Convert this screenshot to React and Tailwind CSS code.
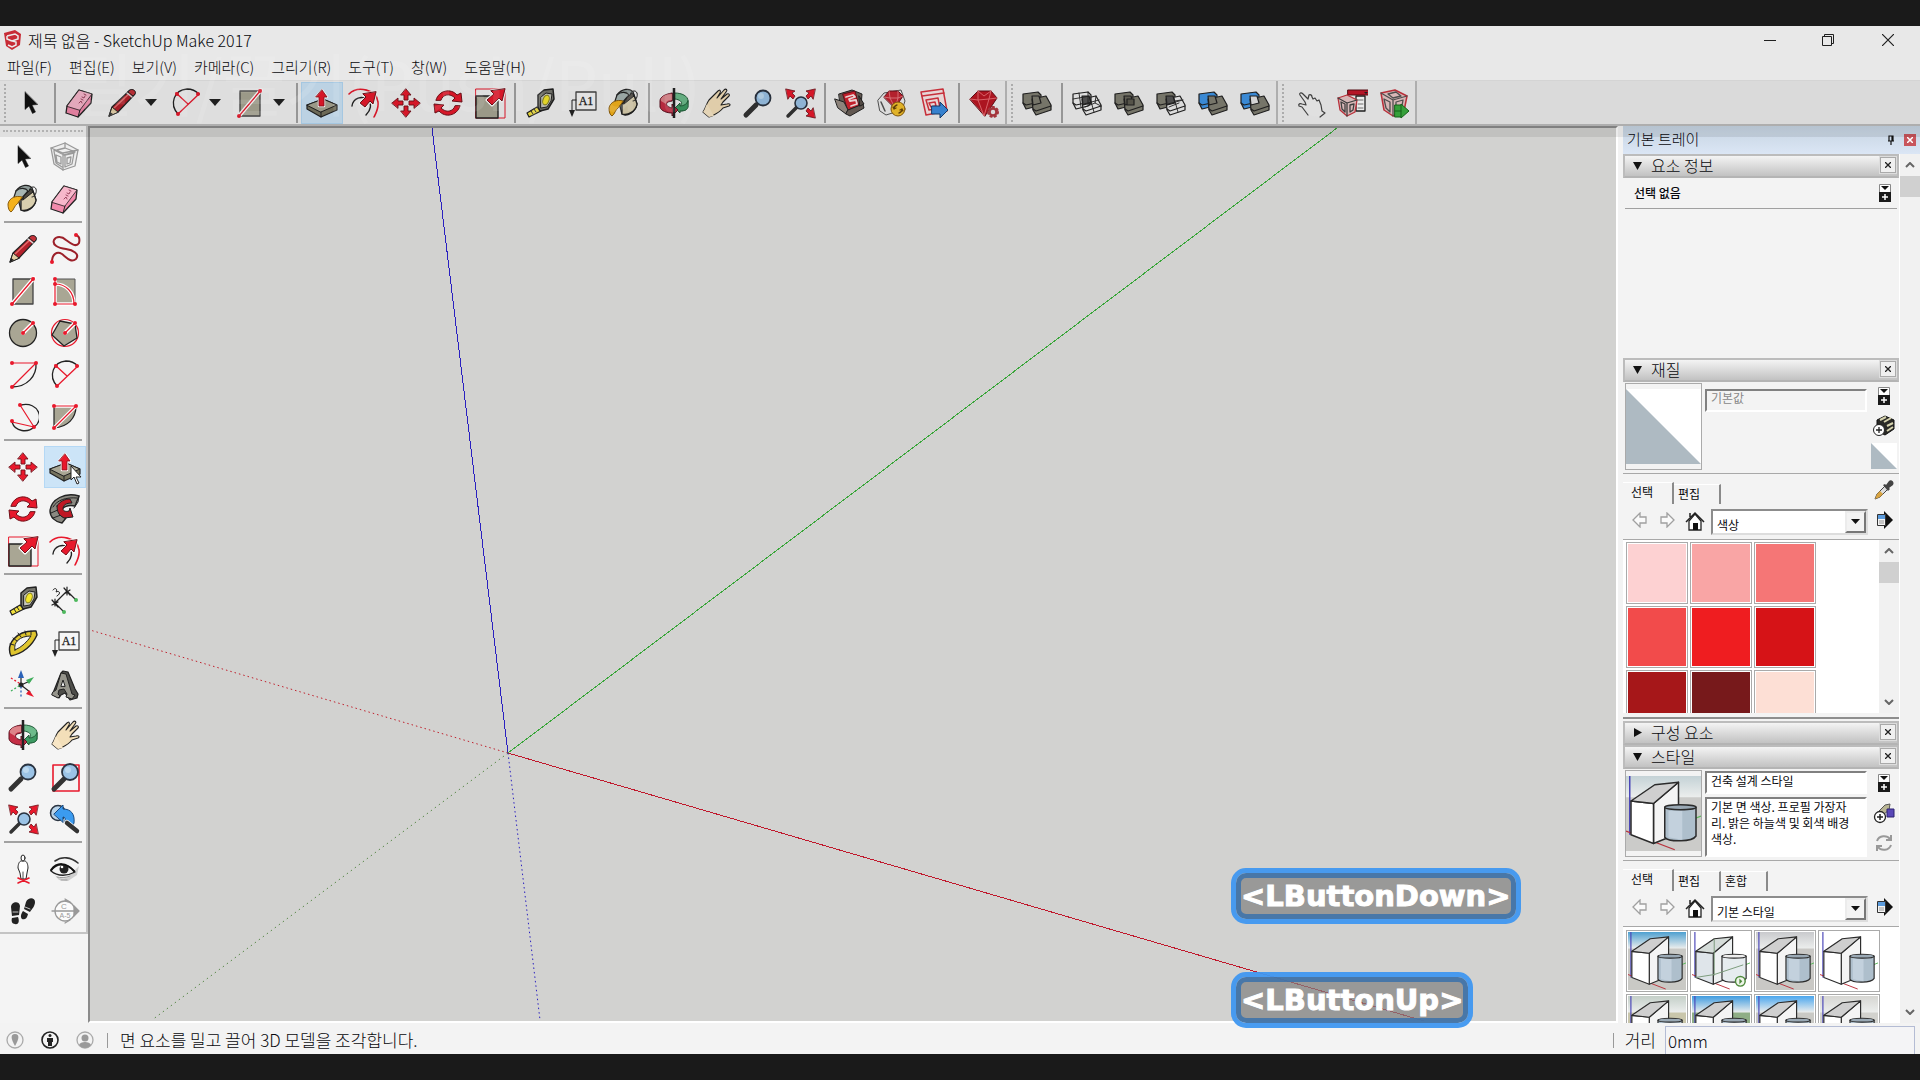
import { useId } from 'react'

const RED = '#e8192c'
const INK = '#222'
const CLAY = '#a9a694'

function Svg({ children, size = 32, label }) {
  return (
    <svg
      width={size}
      height={size}
      viewBox="0 0 32 32"
      fill="none"
      strokeLinecap="round"
      strokeLinejoin="round"
      role={label ? 'img' : undefined}
      aria-label={label}
      className="shrink-0"
    >
      {children}
    </svg>
  )
}

function Dots({ points }) {
  return points.map(([x, y]) => <circle key={x + '-' + y} cx={x} cy={y} r="2" fill={RED} />)
}

// two overlapping blocks, used by every solid tool
function Solids({ back, front, mid, children }) {
  return (
    <Svg>
      <g stroke={INK} strokeWidth="1.2">
        <path d="M2 7 17 5l3 3v8l-3 3-12 3-3-6z" fill={back} />
        <path d="M2 16l3 2 14-3" />
        <path d="M11 12l14-3 5 9v5l-15 5-3-5z" fill={front} />
        <path d="M12 22l3 2 15-5" />
        <path d="M11 9h7l2 7-8 2z" fill={mid} />
        {children}
      </g>
    </Svg>
  )
}

const wire = (
  <g strokeWidth="0.9">
    <path d="M8 6l2 14M2 12l17-3M17 5v13M13 17l15-4M19 11l4 14M25 9l-1 7 6 3M24 16l-10 4" />
  </g>
)

const icons = {
  select: (
    <Svg>
      <path d="M11 5v17.500l4-3.500 3.500 7.500 3-1.500-3.500-7 5.500-.500z" fill="#111" stroke="#111" strokeWidth=".5" />
    </Svg>
  ),
  component: (
    <Svg>
      <g stroke="#999" strokeWidth="1.300">
        <path d="M2 7l14-5 13 7-3 16-12 4L5 23z" fill="#eee" />
        <path d="M2 7l12 5 15-3M14 12v17M5 9l10 5 11-3M5 10l2 12 6 4M16 14l9-2-2 11-7 3zM7 14l5 2v7l-4-2zM16 2v5l-8 2M16 7l8 3M18 17l4-1-1 6-3 1z" />
      </g>
    </Svg>
  ),
  paint: (
    <Svg>
      <path d="M9 8C14 1 22 1 25 5l4 12c-1 8-10 13-15 10z" fill="#8d9a97" stroke={INK} strokeWidth="1.300" />
      <path d="M14 17l12-9 3 9c-1 7-9 12-15 10z" fill="#d9cfae" stroke={INK} strokeWidth="1.300" />
      <path d="M17 13l7-7 2 3-10 8z" fill="#4c4840" stroke={INK} />
      <path d="M9 8c4-4 10-3 12 0l-7 8-7-2z" fill="#a6b5b2" stroke={INK} strokeWidth="1.200" />
      <path d="M22 8c1-5 6-5 7-2s-1 8-4 8" stroke={INK} />
      <path d="M15 14C9 12 2 15 1 21c0 4 1 7 3 8 3-2 3-6 6-8z" fill="#f5b21c" stroke="#8a5c0c" />
    </Svg>
  ),
  eraser: (
    <Svg>
      <path d="M3 19 15 3l13 4-1 9-13 14-12-4z" fill="#f28aac" stroke={INK} strokeWidth="1.300" />
      <path d="M3 19 15 3l13 4-12 16z" fill="#f7b7cb" stroke={INK} strokeWidth="0.800" />
      <path d="M16 23l-2 7" stroke={INK} />
      <path d="M15 16l2-2 1 2M17 12l2 1M18 10l2 1 1-2M20 7l2 1" stroke="#9c4660" />
    </Svg>
  ),
  pencil: (
    <Svg>
      <path d="M3 29l3-9L24 3l5 4-17 18z" fill="#b3202a" stroke={INK} strokeWidth="1.200" />
      <path d="M8 21 25 5" stroke="#e46a6a" strokeWidth="1.500" />
      <path d="M3 29l3-9 6 5z" fill="#e3cfa5" stroke={INK} />
      <path d="M3 29l1-4 3 2z" fill={INK} />
      <path d="M24 3c2-2 7 1 5 4l-2 2-5-4z" fill="#c4323a" stroke={INK} />
      <path d="M21 6l5 4" stroke="#ddd" strokeWidth="1.500" />
    </Svg>
  ),
  freehand: (
    <Svg>
      <path d="M3 29c0-8 5-11 10-8 5 4 9 9 14 5 4-5-3-9-10-10C9 15 3 12 5 7c2-4 8-4 12 0 4 3 10 8 13 3 1-4 0-7-3-8" stroke="#9c2029" strokeWidth="2" />
      <Dots points={[[3, 29], [27, 2]]} />
    </Svg>
  ),
  rect: (
    <Svg>
      <path d="M6 4h20v25H6z" fill={CLAY} stroke="#444" strokeWidth="1.300" />
      <path d="M5 29 27 3" stroke="#fff" strokeWidth="4" />
      <path d="M5 29 27 3" stroke={RED} strokeWidth="1.300" />
      <Dots points={[[5, 29], [26, 4]]} />
    </Svg>
  ),
  rotrect: (
    <Svg>
      <path d="M6 4h20v25H6z" fill={CLAY} stroke="#555" />
      <path d="M6 9c11 0 19 8 19 20H6V4" stroke="#fff" strokeWidth="3.500" />
      <path d="M6 9c11 0 19 8 19 20H6V4" stroke={RED} strokeWidth="1.200" />
      <Dots points={[[6, 4], [6, 9], [6, 29], [26, 29]]} />
    </Svg>
  ),
  circle: (
    <Svg>
      <circle cx="16" cy="16" r="13.500" fill={CLAY} stroke={INK} strokeWidth="1.300" />
      <path d="M16 16 26 6" stroke="#fff" strokeWidth="4" />
      <path d="M16 16 26 6" stroke={RED} strokeWidth="1.300" />
      <Dots points={[[16, 16], [26, 6]]} />
    </Svg>
  ),
  polygon: (
    <Svg>
      <circle cx="16" cy="16" r="13.500" stroke={RED} strokeWidth="1.200" />
      <path d="M11 4 26 7l2 14-13 8L3 18z" fill={CLAY} stroke={INK} strokeWidth="1.300" />
      <path d="M16 16 26 6" stroke="#fff" strokeWidth="4" />
      <path d="M16 16 26 6" stroke={RED} strokeWidth="1.300" />
      <Dots points={[[16, 16], [26, 6]]} />
    </Svg>
  ),
  arc: (
    <Svg>
      <path d="M29 4c1 13-9 24-24 24" stroke={INK} strokeWidth="1.300" />
      <path d="M5 4h24L5 28" stroke={RED} strokeWidth="1.200" />
      <Dots points={[[5, 4], [29, 4], [5, 28]]} />
    </Svg>
  ),
  arc2: (
    <Svg>
      <path d="M8 27C-1 17 4 3 17 2c6 0 10 3 12 5" stroke={INK} strokeWidth="1.300" />
      <path d="M8 27 29 7M6 6l12 11" stroke={RED} strokeWidth="1.300" />
      <Dots points={[[8, 27], [28, 7], [7, 7]]} />
    </Svg>
  ),
  arc3: (
    <Svg>
      <path d="M14 4c18-4 24 15 13 22-6 6-19 5-22-5" stroke={INK} strokeWidth="1.300" />
      <path d="M13 4l14 22L5 21" stroke={RED} strokeWidth="1.200" />
      <Dots points={[[13, 4], [27, 26], [5, 20]]} />
    </Svg>
  ),
  pie: (
    <Svg>
      <path d="M5 5h22C27 17 19 26 5 27z" fill={CLAY} stroke={INK} strokeWidth="1.200" />
      <path d="M5 5h22L5 27" stroke="#fff" strokeWidth="3.500" />
      <path d="M5 5h22L5 27" stroke={RED} strokeWidth="1.200" />
      <Dots points={[[5, 5], [27, 5], [5, 27]]} />
    </Svg>
  ),
  move: (
    <Svg>
      <path
        d="M16 2l5 6h-3v5h-4V8h-3zM16 30l5-6h-3v-5h-4v5h-3zM2 16l6-5v3h5v4H8v3zM30 16l-6-5v3h-5v4h5v3z"
        fill={RED}
        stroke="#701018"
        strokeWidth=".900"
      />
    </Svg>
  ),
  pushpull: (
    <Svg>
      <path d="M1 18 17 12l14 6v5L15 30 1 22z" fill="#77745f" stroke={INK} strokeWidth="1.200" />
      <path d="M1 18 17 12l14 6-16 7z" fill={CLAY} stroke={INK} />
      <path d="M15 25v5" stroke={INK} />
      <path d="M16 3l5 7h-3v9h-5v-9h-3z" fill={RED} stroke="#fff" strokeWidth="2.500" />
      <path d="M16 3l5 7h-3v9h-5v-9h-3z" fill={RED} stroke="#8a0f1a" strokeWidth=".800" />
    </Svg>
  ),
  rotate: (
    <Svg>
      <g fill={RED} stroke="#701018">
        <path d="M4 13C7 3 19 1 25 8l4-2 1 9-10-1 3-3C18 6 11 7 9 13z" />
        <path d="M28 19c-3 10-15 12-21 5l-4 2-1-9 10 1-3 3c5 5 12 4 14-2z" />
      </g>
    </Svg>
  ),
  follow: (
    <Svg>
      <path d="M30 3C16-1 2 6 1 18c0 6 5 11 12 12l4-5c-6-2-7-6-4-9 3-3 8-4 13-3z" fill="#8a8981" stroke={INK} strokeWidth="1.400" />
      <path d="M30 3l-1 6-4 6M4 14c4-7 13-10 24-9M2 20l9-4M4 25l8-3" stroke={INK} />
      <path d="M8 13c3-5 8-7 13-7l2 4c-6 0-9 2-9 6 0 2 3 3 6 2l1-3 3 9-9 1-3-2c-3-2-4-6-4-10z" fill="#c01824" stroke={INK} />
    </Svg>
  ),
  scale: (
    <Svg>
      <path d="M2 2h29v29H2z" stroke={RED} />
      <path d="M2 9h22v22H2z" fill={CLAY} stroke={INK} strokeWidth="1.400" />
      <path d="M31 2l-3 12-3-3-7 7-5-5 7-6-3-3z" fill={RED} stroke="#fff" strokeWidth="3" />
      <path d="M31 2l-3 12-3-3-7 7-5-5 7-6-3-3z" fill={RED} stroke="#701018" />
    </Svg>
  ),
  offset: (
    <Svg>
      <path d="M1 7c9-9 28-4 29 8 1 6-2 11-4 15" stroke={RED} strokeWidth="1.600" />
      <path d="M4 19c1-8 10-11 16-6 4 4 3 10-2 15" stroke={INK} strokeWidth="1.400" />
      <path d="M28 5l-3 12-3-3-5 6-5-4 6-6-3-3z" fill={RED} stroke="#fff" strokeWidth="3" />
      <path d="M28 5l-3 12-3-3-5 6-5-4 6-6-3-3z" fill={RED} stroke="#701018" />
    </Svg>
  ),
  tape: (
    <Svg>
      <path d="M13 20 3 26l2 4 12-6z" fill="#f2e13c" stroke={INK} strokeWidth="1.200" />
      <path d="M7 24l2 3M10 22l2 3" stroke={INK} />
      <path d="M14 8 20 3l9-1 1 10-6 10-8 2-2-4z" fill="#77776f" stroke={INK} strokeWidth="1.500" />
      <path d="M17 10l5-4 6 1-1 7-4 6-6 1z" fill="#c8c8be" stroke={INK} />
      <ellipse cx="22" cy="13" rx="3" ry="5" transform="rotate(20 22 13)" fill="#f5e72c" stroke="#8b841d" />
    </Svg>
  ),
  dimension: (
    <Svg>
      <path d="M6 18 18 6M18 6l9 9M6 18l9 9M3 15l6 7M3 20l6-3M6 14v7M15 3l6 7M15 9l6-4M18 2v8" stroke={INK} strokeWidth="1.200" />
      <path d="M4 5c2-3 5-1 3 2 4-2 5 2 1 4" stroke={INK} />
      <circle cx="27" cy="15" r="2" fill="#4cb85c" />
      <circle cx="15" cy="27" r="2" fill="#4cb85c" />
    </Svg>
  ),
  protractor: (
    <Svg>
      <path d="M4 29C-1 18 8 3 29 4l1 4C25 19 17 26 4 29z" fill="#dfc52e" stroke={INK} strokeWidth="1.400" />
      <path d="M8 23C6 15 13 9 24 9 20 15 15 20 8 23z" fill="#f5f5f4" stroke={INK} />
      <path d="M3 17l4 1M6 11l4 3M11 6l3 4M18 4l1 4M24 4v4" stroke={INK} />
    </Svg>
  ),
  text: (
    <Svg>
      <path d="M10 5h20v18H10z" fill="#f6f6f6" stroke="#444" strokeWidth="1.300" />
      <path d="M10 13H6v12" stroke={INK} />
      <path d="M3 23h6l-3 7z" fill={INK} />
      <text x="20" y="18" textAnchor="middle" fontSize="12" fontFamily="Liberation Serif, serif" fill={INK} stroke={INK} strokeWidth=".3">
        A1
      </text>
    </Svg>
  ),
  axes: (
    <Svg>
      <path d="M14 16V8M14 16l9-4M14 16l9 7" stroke={INK} strokeWidth="1.200" />
      <path d="M14 1l3 8h-6z" fill="#2b62b8" />
      <path d="M27 8l-5 7-3-4z" fill="#3fae5b" />
      <path d="M27 28l-8-3 3-4z" fill={RED} />
      <circle cx="14" cy="16" r="2.500" fill={INK} />
      <path d="M14 18v10" stroke="#2b62b8" strokeWidth="1.300" strokeDasharray="1 3" />
      <path d="M12 17l-8 5" stroke="#3fae5b" strokeWidth="1.300" strokeDasharray="1 3" />
      <path d="M12 14 4 9" stroke={RED} strokeWidth="1.300" strokeDasharray="1 3" />
    </Svg>
  ),
  text3d: (
    <Svg>
      <path d="M4 24 12 4l2-2 5 1 7 17 3 5-1 4-7 2-5-7-4 2-2 3-6-3z" fill="#4e4e4a" stroke={INK} strokeWidth="1.200" />
      <path d="M4 23l3-2 5-17 5 1 6 20 3 1-3 4-6-2 1-3-3-5-5 1-1 4 2 2-2 2-6-3z" fill="#96958c" stroke={INK} />
      <path d="M12 17l2-6 2 6z" fill="#f2f2f2" stroke={INK} />
    </Svg>
  ),
  orbit: (
    <Svg>
      <path d="M17 6c7 0 13 3 13 8v6c-1 3-5 4-9 4v-5c4-1 4-6-4-7z" fill="#6dbb8b" stroke="#205c38" />
      <path d="M30 14c-1 3-4 5-8 5v-3l-5 5 5 5v-2c5 0 8-1 8-5z" fill="#3c9a62" stroke="#205c38" />
      <path d="M14 6C7 7 2 10 2 14v6c1 4 7 6 12 6v3l6-6-6-6v4c-5-1-7-4-4-6l4-1z" fill="#c52e45" stroke="#5d1422" />
      <path d="M14 7C7 7 2 10 3 14l5 3c0-3 2-4 6-4z" fill="#dd8389" />
      <path d="M16 1v30" stroke={INK} strokeWidth="2.500" strokeLinecap="butt" />
    </Svg>
  ),
  hand: (
    <Svg>
      <path
        d="M3 25c3-4 3-8 6-12L18 4c2-2 3 0 2 2l-3 5 7-8c2-2 4 0 2 2l-5 7 6-5c2-1 3 1 2 2l-6 6-2 3 6-1c3-1 4 1 2 2l-6 2c-3 4-7 6-11 8l-3 1z"
        fill="#f3dfb9"
        stroke={INK}
        strokeWidth="1.100"
      />
      <path d="M3 25c2-2 2-5 4-8l7 12-5 1z" fill="#f8e6c6" />
    </Svg>
  ),
  zoom: (
    <Svg>
      <path d="M4 28 14 18" stroke="#333" strokeWidth="5" />
      <circle cx="21" cy="11" r="7.500" fill="#9bc3e6" stroke="#2a3340" strokeWidth="1.800" />
      <circle cx="19" cy="9" r="3" fill="#bcd9f0" />
    </Svg>
  ),
  zoomwin: (
    <Svg>
      <path d="M4 4h26v26H4z" stroke={RED} strokeWidth="1.600" />
      <path d="M5 28 15 18" stroke="#333" strokeWidth="5" />
      <circle cx="21" cy="11" r="8" fill="#9bc3e6" stroke="#2a3340" strokeWidth="1.800" />
      <circle cx="19" cy="9" r="3" fill="#bcd9f0" />
    </Svg>
  ),
  extents: (
    <Svg>
      <path d="M4 29l9-9" stroke="#333" strokeWidth="3.500" />
      <circle cx="17" cy="16" r="6" fill="#9bc3e6" stroke="#2a3340" strokeWidth="1.600" />
      <g fill={RED} stroke="#701018" strokeWidth=".800">
        <path d="M2 2l9 2-3 2 3 3-2 3-3-3-2 3z" />
        <path d="M31 2l-9 2 3 2-3 3 2 3 3-3 2 3z" />
        <path d="M31 31l-9-2 3-2-3-3 2-3 3 3 2-3z" />
      </g>
    </Svg>
  ),
  previous: (
    <Svg>
      <circle cx="9" cy="10" r="7.500" fill="#b9d3e8" stroke="#2a3340" strokeWidth="1.500" />
      <path d="M5 11 14 2v4c8 0 12 5 11 14l-3 6-7-6c2-4 1-6-1-6v5z" fill="#3b9bf0" stroke="#184a80" />
      <path d="M18 20l10 8" stroke="#fff" strokeWidth="6" />
      <path d="M18 20l10 8" stroke="#333" strokeWidth="4.500" />
    </Svg>
  ),
  camera: (
    <Svg>
      <path d="M14 8c-2 0-3 4-3 7l2 5 1 6h5l1-6 1-5c0-3-1-7-3-7z" fill="#fff" stroke={INK} />
      <ellipse cx="16" cy="5" rx="2" ry="3" fill="#fff" stroke={INK} />
      <path d="M16 19v7" stroke={INK} strokeWidth=".800" />
      <path d="M11 30l11-5M11 25l11 5" stroke={RED} strokeWidth="1.600" />
    </Svg>
  ),
  look: (
    <Svg>
      <path d="M6 8c7-5 16-4 23 2" stroke="#333" strokeWidth="1.600" />
      <path d="M4 20c8 9 16 6 22-3l4-4-2 9-9 6-9-1z" fill="#cfcfcf" />
      <path d="M2 18c6-9 16-8 24 1-7 4-17 5-24-1z" fill="#f4f4f4" stroke="#222" strokeWidth="1.300" />
      <circle cx="15" cy="16" r="4.500" fill="#222" />
      <circle cx="13" cy="14" r="1.300" fill="#fff" />
      <path d="M2 17c6-8 15-8 23 1" stroke="#111" strokeWidth="2" />
      <path d="M8 24c3 1 9 1 13-1M12 27h6" stroke="#999" />
    </Svg>
  ),
  walk: (
    <Svg>
      <g fill="#222">
        <path d="M4 12c0-5 8-7 9-1l-1 9-7 1z" />
        <path d="M5 23l6-1c2 5 0 8-3 7-3 0-4-3-3-6z" />
        <path d="M19 7c2-5 9-5 9 0 0 4-3 7-5 10l-6-3z" />
        <path d="M16 16l5 3c-1 5-4 6-6 5-2-2-1-5 1-8z" />
      </g>
      <path d="M6 17h5M18 12l5 2" stroke="#eee" strokeWidth=".8" />
    </Svg>
  ),
  section: (
    <Svg>
      <circle cx="16" cy="16" r="10" fill="#fbfbfb" stroke="#999" strokeWidth="1.300" />
      <path d="M3 16h26M25 11l5 5-5 5zM16 4l5 3-5-1M16 28l5-3" stroke="#999" fill="#999" strokeWidth="1.300" />
      <text x="15" y="14" fontSize="8" textAnchor="middle" fill="#999" fontFamily="Liberation Sans, sans-serif">C</text>
      <text x="16" y="23" fontSize="7" textAnchor="middle" fill="#999" fontFamily="Liberation Sans, sans-serif">A-5</text>
    </Svg>
  ),
  warehouse: (
    <Svg>
      <path d="M5 7l13-4 10 4-1 12-14 8-6-5z" fill="#6b6058" stroke={INK} />
      <path d="M9 7l12-3 4 15-11 4z" fill="#d3222f" stroke="#66101a" />
      <path d="M12 10l7-2 2 2-6 2 1 2 6-1 1 4-6 2" stroke="#fbe3e3" strokeWidth="1.800" />
      <path d="M1 12l9 3 4 8-2 4-8-6z" fill="#9a8f86" stroke={INK} />
      <path d="M14 23l15-6 1 4-14 8-4-2z" fill="#6b6058" stroke={INK} />
      <path d="M25 9l5 8-4 2z" fill="#5c524b" stroke={INK} />
    </Svg>
  ),
  extwarehouse: (
    <Svg>
      <path d="M2 13l6-7 17-3 4 11-3 9-16 5-6-4z" fill="#efefef" stroke="#555" />
      <path d="M8 10l5-6h9l5 5-8 12z" fill="#c32431" stroke="#66101a" />
      <path d="M8 10l6 1 5 10 3-10 5-2M13 4l1 7 8 0V4" stroke="#ef8a8f" strokeWidth=".8" />
      <path d="M5 15l4 9" stroke="#555" strokeWidth="1.500" />
      <circle cx="22" cy="22" r="7" fill="#f4c22c" stroke="#8a5c0c" />
      <path d="M18 22a4 4 0 0 1 3-4M26 22a4 4 0 0 1-3 4M18 22l-1-2M18 22l2-1M26 22l1 2M26 22l-2 1" stroke="#6a460a" strokeWidth="1.300" />
    </Svg>
  ),
  layout: (
    <Svg>
      <path d="M3 5 25 2l4 22-21 4z" fill="#fbe9e9" stroke="#d8343f" strokeWidth="1.500" />
      <path d="M4 9l22-3M8 13l12-2 2 10-11 2zM11 16l6-1 1 4-5 1z" stroke="#d8343f" strokeWidth="1.500" />
      <path d="M14 19h8v-4l8 8-8 8v-4h-8z" fill="#3b8de0" stroke="#173f70" />
    </Svg>
  ),
  gem: (
    <Svg>
      <path d="M2 12l8-8h13l6 7-12 18z" fill="#bb1723" stroke="#660d16" />
      <path d="M2 12l8 1 6 16 5-17 8-1M10 4l0 9 11-1 2-8M10 4l6 5 7-5" stroke="#ef747a" strokeWidth=".9" />
      <circle cx="25" cy="25" r="3.500" fill="#eee" stroke="#b23a42" strokeWidth="2.500" />
      <circle cx="25" cy="25" r="5" stroke="#b23a42" strokeWidth="2" strokeDasharray="1.500 3" />
    </Svg>
  ),
  outer: <Solids back="#817f72" front="#817f72" mid="#817f72" />,
  intersect: (
    <Solids back="none" front="none" mid="#555">
      {wire}
    </Solids>
  ),
  union: (
    <Solids back="#817f72" front="#817f72" mid="#666459">
      <path d="M14 12h7v6h-7z" fill="#5d5b50" />
    </Solids>
  ),
  subtract: (
    <Solids back="#817f72" front="#eee" mid="#555">
      <path d="M13 17l15-4M19 11l4 14M24 16l-10 4M20 14l6-1" strokeWidth=".9" />
    </Solids>
  ),
  trim: <Solids back="#3f95e6" front="#817f72" mid="#817f72" />,
  split: <Solids back="#3f95e6" front="#817f72" mid="#e6e6e6" />,
  interact: (
    <Svg>
      <path
        d="M14 28 8 20l-3-1c-1-2 1-3 3-2l4 1-1-3-5-7c-1-2 1-3 3-1l5 5 1-4c1-1 3 0 3 2l1 2 2-1 2 3 2-1 2 5 1 6 3 2-5 4"
        fill="#f4f4f4"
        stroke="#444"
        strokeWidth="1.200"
      />
    </Svg>
  ),
  options: (
    <Svg>
      <path d="M20 9h9v15h-9z" fill="#fff" stroke={INK} strokeWidth="1.300" />
      <path d="M22 13h5M22 17h5M22 21h5" stroke="#777" />
      <path d="M12 3h21v5H12z" fill="#c5172b" stroke="#5c0d14" />
      <path d="M28 5h4l-2 2z" fill="#222" />
      <path d="M2 11l9-3 10 5-2 12-8 4-7-6z" fill="#eac7c7" stroke="#c8343f" strokeWidth="1.300" />
      <path d="M2 11l9 5 10-3M11 16v13M5 15l4 2v8l-3-3zM14 18l4-1-1 6-3 2z" stroke="#444" strokeWidth="1.300" />
    </Svg>
  ),
  attributes: (
    <Svg>
      <path d="M3 6 17 3l12 6-3 15-11 5-9-6z" fill="#eac7c7" stroke="#c8343f" strokeWidth="1.500" />
      <path d="M3 6l12 7 14-4M15 13v16M6 12l6 3v10l-4-4zM18 15l7-2-1 6-6 2zM10 7l8-2 5 4-8 2z" stroke="#555" strokeWidth="1.300" />
      <path d="M17 18h6v-1l8 7-8 7v-1h-6z" fill="#3aae3f" stroke="#176b1c" />
      <path d="M17 24h6M23 18v12" stroke="#176b1c" />
    </Svg>
  ),
}

function ToolButton({ name, label, active, caret }) {
  return (
    <>
      <button
        aria-label={label}
        className={
          'flex h-[42px] w-[42px] shrink-0 items-center justify-center ' + (active ? 'bg-[#cce4f7] outline outline-1 -outline-offset-1 outline-[#b4d8f5]' : '')
        }
      >
        {icons[name]}
      </button>
      {caret && (
        <button aria-label={label + ' 옵션'} className="flex w-[22px] items-center pl-[2px]">
          <svg width="12" height="7" viewBox="0 0 12 7">
            <path d="M0 0h12L6 7z" fill="#222" />
          </svg>
        </button>
      )}
    </>
  )
}

const VSep = () => <span className="mx-[3px] h-[40px] w-[2px] shrink-0 bg-[#a3a3a3]" />
const Grip = () => <span className="mx-[3px] h-[38px] w-0 shrink-0 border-l-2 border-dotted border-[#bbb]" />

const toolbar = [
  [['select', '선택'], '|', ['eraser', '지우개'], ['pencil', '선', 'caret'], ['arc2', '호', 'caret'], ['rect', '직사각형', 'caret'], '|',
    ['pushpull', '밀기/끌기', 'active'], ['offset', '오프셋'], ['move', '이동'], ['rotate', '회전'], ['scale', '배율'], '|',
    ['tape', '줄자'], ['text', '텍스트'], ['paint', '페인트통'], '|',
    ['orbit', '궤도'], ['hand', '이동 보기'], ['zoom', '확대/축소'], ['extents', '범위 확대'], '|',
    ['warehouse', '3D Warehouse'], ['extwarehouse', 'Extension Warehouse'], ['layout', 'LayOut'], '|', ['gem', '루비']],
  [['outer', '외부 쉘'], '|', ['intersect', '교차'], ['union', '결합'], ['subtract', '빼기'], ['trim', '자르기'], ['split', '분할']],
  [['interact', '상호 작용'], ['options', '구성 요소 옵션'], ['attributes', '구성 요소 속성']],
]

const palette = [
  [['select', '선택'], ['component', '구성 요소 만들기'], ['paint', '페인트통'], ['eraser', '지우개']],
  [['pencil', '선'], ['freehand', '자유형'], ['rect', '직사각형'], ['rotrect', '회전된 직사각형'], ['circle', '원'], ['polygon', '다각형'],
    ['arc', '호'], ['arc2', '2점 호'], ['arc3', '3점 호'], ['pie', '파이']],
  [['move', '이동'], ['pushpull', '밀기/끌기', 'active'], ['rotate', '회전'], ['follow', '따라가기'], ['scale', '배율'], ['offset', '오프셋']],
  [['tape', '줄자'], ['dimension', '치수'], ['protractor', '각도기'], ['text', '텍스트'], ['axes', '축'], ['text3d', '3D 텍스트']],
  [['orbit', '궤도'], ['hand', '이동 보기'], ['zoom', '확대/축소'], ['zoomwin', '창 확대'], ['extents', '범위 확대'], ['previous', '이전']],
  [['camera', '카메라 배치'], ['look', '둘러보기'], ['walk', '걷기'], ['section', '단면']],
]

const menus = ['파일(F)', '편집(E)', '보기(V)', '카메라(C)', '그리기(R)', '도구(T)', '창(W)', '도움말(H)']

function TitleBar() {
  return (
    <header className="flex h-[30px] items-center bg-[#fcfcfc] pb-[2px] pl-1">
      <svg width="18" height="20" viewBox="0 0 18 20" className="mr-[6px]">
        <path d="M0 3 11 0l6 4-1 11-8 5-6-4z" fill="#d9303b" />
        <path d="M3 6l8-2 3 2v3l-6 2 4 1v3l-4 2-4-2M3 6v3l5 2" fill="none" stroke="#fff" strokeWidth="1.500" />
      </svg>
      <h1 className="flex-1 text-base font-light">제목 없음 - SketchUp Make 2017</h1>
      <button aria-label="최소화" className="flex h-full w-[56px] items-center justify-center">
        <svg width="12" height="12" viewBox="0 0 12 12"><path d="M0 6.500h12" stroke="#222" /></svg>
      </button>
      <button aria-label="이전 크기로 복원" className="flex h-full w-[60px] items-center justify-center">
        <svg width="12" height="12" viewBox="0 0 12 12" fill="none" stroke="#222">
          <path d="M.5 2.500h9v9h-9zM2.500 2.500v-2h9v9h-2" />
        </svg>
      </button>
      <button aria-label="닫기" className="flex h-full w-[60px] items-center justify-center">
        <svg width="12" height="12" viewBox="0 0 12 12"><path d="M0 0l12 12M12 0 0 12" stroke="#222" strokeWidth="1.200" /></svg>
      </button>
      <span className="w-[2px]" />
    </header>
  )
}

function Toolbar() {
  return (
    <div className="flex h-[46px] border-t border-[#e6e6e6] bg-[#ededed]">
      {toolbar.map((group, g) => (
        <div key={g} className="flex items-center border-r-2 border-b-2 border-[#bdbdbd] bg-[#f1f1f1] pl-[1px]">
          <Grip />
          {g === 2 && <span className="w-[2px]" />}
          {group.map((t, i) =>
            t === '|' ? <VSep key={i} /> : <ToolButton key={i} name={t[0]} label={t[1]} active={t[2] === 'active'} caret={t[2] === 'caret'} />
          )}
        </div>
      ))}
      <div className="flex-1 border-b-2 border-[#bdbdbd]" />
    </div>
  )
}

function Palette() {
  return (
    <aside className="w-[88px] shrink-0 bg-[#f4f4f4]">
      <div className="border-r-2 border-b-2 border-[#c4c4c4]">
        <div className="mx-[3px] h-[10px] pt-1">
          <div className="border-t-2 border-dotted border-[#c2c2c2]" />
        </div>
        {palette.map((group, g) => (
          <div key={g}>
            {g > 0 && <div className="mx-1 mt-[1px] mb-[5px] h-[2px] bg-[#a2a2a2]" />}
            <div className="grid grid-cols-2 pl-[2px]">
              {group.map((t) => (
                <ToolButton key={t[0]} name={t[0]} label={t[1]} active={t[2] === 'active'} />
              ))}
            </div>
          </div>
        ))}
      </div>
    </aside>
  )
}

function KeyBadge({ children }) {
  return (
    <div className="w-fit rounded-[15px] border-[5px] border-[#3f97f0]/95">
      <div className="rounded-[10px] border-[5px] border-[#3f73aa]/90 bg-[#808080]/70 font-['DejaVu_Sans',sans-serif] text-[29px] leading-[36px] font-bold text-white [-webkit-text-stroke:1px_white]">
        {children}
      </div>
    </div>
  )
}

function Viewport() {
  return (
    <main className="relative min-w-0 flex-1 border-t-2 border-r-2 border-b-2 border-l-2 border-t-[#8b8b8b] border-r-white border-b-white border-l-[#8b8b8b] bg-[#d2d2d0]">
      <svg width="100%" height="100%" viewBox="90 128 1526 893" preserveAspectRatio="xMinYMin slice" fill="none" className="absolute inset-0">
        <g shapeRendering="crispEdges">
          <path d="M508 753 1337 128" stroke="#3aa63a" />
          <path d="M508 753 432 128" stroke="#2a20c0" />
          <path d="M508 753l916 268" stroke="#c0182c" />
        </g>
        <path d="M508 753 90 630" stroke="#c0202c" strokeDasharray="1.500 3" />
        <path d="M508 753 152 1020" stroke="#5c8a4c" strokeDasharray="1.500 3.500" />
        <path d="M508 753l32 267" stroke="#2a20c0" strokeDasharray="1.500 3" />
      </svg>
      <div className="absolute right-[95px] -bottom-[7px] z-10 flex w-[290px] flex-col gap-[48px]">
        <KeyBadge>&lt;LButtonDown&gt;</KeyBadge>
        <KeyBadge>&lt;LButtonUp&gt;</KeyBadge>
      </div>
    </main>
  )
}

function SectionHeader({ title, closed }) {
  return (
    <div className="flex h-[24px] shrink-0 items-center border-2 border-[#bcbcbc] border-b-[#b4b4b4] bg-linear-to-b from-[#f4f4f4] to-[#c2c2c2] pr-[1px] pb-[2px] pl-2">
      <button aria-expanded={!closed} className="flex flex-1 items-center gap-[9px] text-left text-base leading-5 font-light">
        <svg width="9" height="9" viewBox="0 0 9 9">
          <path d={closed ? 'M1 0v9l8-4.500z' : 'M0 1h9L4.500 9z'} fill="#111" />
        </svg>
        {title}
      </button>
      <button aria-label={title + ' 닫기'} className="flex h-4 w-4 items-center justify-center border border-[#aaa] bg-[#f0f0f0] outline outline-[#ddd]">
        <svg width="6" height="6" viewBox="0 0 6 6"><path d="M0 0l6 6M6 0 0 6" stroke="#222" strokeWidth="1.300" /></svg>
      </button>
    </div>
  )
}

function ToggleIcon() {
  return (
    <svg width="12" height="18" viewBox="0 0 12 18">
      <path d="M.5.500h11v17H.5z" fill="#fff" stroke="#888" />
      <path d="M2 2h8L6 6z" fill="#111" />
      <path d="M0 8h12v10H0z" fill="#1a1a1a" />
      <path d="M6 10v6M3 13h6" stroke="#fff" strokeWidth="1.500" />
    </svg>
  )
}

function Scroll({ className }) {
  return (
    <div className={'flex shrink-0 flex-col items-center bg-[#f1f1f1] pt-2 pb-2 ' + className}>
      <svg width="10" height="6" viewBox="0 0 10 6">
        <path d="M1 5l4-4 4 4" fill="none" stroke="#666" strokeWidth="2" />
      </svg>
      <span className="mt-2 h-[21px] w-full bg-[#d0d0d0]" />
      <span className="flex-1" />
      <svg width="10" height="6" viewBox="0 0 10 6">
        <path d="M1 1l4 4 4-4" fill="none" stroke="#666" strokeWidth="2" />
      </svg>
    </div>
  )
}

function Tabs({ names, dropper }) {
  return (
    <div className="flex h-[30px] shrink-0 items-end text-xs">
      {names.map((n, i) => (
        <button
          key={n}
          className={
            'border-t border-r-2 border-t-white border-r-[#8a8a8a] text-left ' + (i === 0 ? 'h-[22px] w-[51px] pb-1 pl-2' : 'h-[20px] w-[47px] pb-[2px] pl-1')
          }
        >
          {n}
        </button>
      ))}
      {dropper && (
        <button aria-label="스포이트" className="mr-[4px] mb-[3px] ml-auto">
          <svg width="22" height="22" viewBox="0 0 22 22">
            <path d="M2 20l2-5 8-8 3 3-8 8z" fill="#ddd" stroke="#444" />
            <path d="M2 20l2-5 3-3 3 3-3 3z" fill="#d9a441" />
            <path d="M10 6l2-1 1 1 3-4c2-2 6 1 4 4l-4 3 1 1-2 2z" fill="#444" />
          </svg>
        </button>
      )}
    </div>
  )
}

function NavRow({ label, value }) {
  return (
    <div className="flex h-[36px] shrink-0 items-center border-b border-[#a8a8a8] pl-[9px]">
      <button aria-label="뒤로" className="pb-1">
        <svg width="15" height="16" viewBox="0 0 15 16"><path d="M1 8l7-7v4h6v6H8v4z" fill="#fafafa" stroke="#a0a0a0" strokeWidth="1.300" /></svg>
      </button>
      <button aria-label="앞으로" className="ml-[13px] pb-1">
        <svg width="15" height="16" viewBox="0 0 15 16"><path d="M14 8 7 1v4H1v6h6v4z" fill="#fafafa" stroke="#a0a0a0" strokeWidth="1.300" /></svg>
      </button>
      <button aria-label="홈" className="ml-[10px] pb-[2px]">
        <svg width="20" height="20" viewBox="0 0 20 20">
          <path d="M4 10v9h12v-9l-6-7z" fill="#fff" stroke="#222" strokeWidth="1.300" />
          <path d="M1 11l9-9 9 9M5 6V2" fill="none" stroke="#222" strokeWidth="1.500" />
          <path d="M8 12h5v7H8z" fill="#111" />
        </svg>
      </button>
      <div className="relative ml-[6px] h-[26px] min-w-0 flex-1 border-2 border-[#8c8c8c] border-r-[#ddd] border-b-[#ddd] bg-white">
        <select aria-label={label} className="h-full w-full appearance-none pl-1 text-xs/[20px] outline-none">
          <option>{value}</option>
        </select>
        <span className="pointer-events-none absolute inset-y-0 right-0 flex w-[21px] items-center justify-center border-2 border-[#ececec] border-r-[#777] border-b-[#777] bg-[#f3f3f3]">
          <svg width="9" height="5" viewBox="0 0 9 5"><path d="M0 0h9L4.500 5z" fill="#111" /></svg>
        </span>
      </div>
      <button aria-label="세부 정보" className="mr-[6px] ml-[9px] pb-[3px]">
        <svg width="16" height="18" viewBox="0 0 16 18">
          <path d="M7 0l9 9-9 9z" fill="#111" />
          <path d="M.5 3.500h8v11h-8z" fill="#f4f4f4" stroke="#333" />
          <path d="M1 4h7v4H1z" fill="#5b9bdc" />
          <path d="M2 10h5M2 12h5" stroke="#999" />
        </svg>
      </button>
    </div>
  )
}

const swatches = ['#fdd1d2', '#f9a5a5', '#f57676', '#f24b4b', '#ef1d20', '#d61317', '#a61719', '#77191b', '#fddfd5']

// house and cylinder preview used by the style thumbnails
function StyleScene({ sky, ground, ghost, size = 58 }) {
  const id = useId()
  const face = ghost ? '#dfe5ea' : '#fff'
  return (
    <svg width={size} height={size} viewBox="0 0 60 60" fill="none" className="shrink-0">
      <defs>
        <linearGradient id={id} x1="0" y1="0" x2="0" y2="1">
          <stop offset="0" stopColor={sky} />
          <stop offset="1" stopColor={ground === '#ffffff' ? '#ffffff' : '#eceeed'} />
        </linearGradient>
      </defs>
      <path d="M0 0h60v60H0z" fill={ground} />
      <path d="M0 0h60v17H0z" fill={'url(#' + id + ')'} />
      <path d="M3 0v47" stroke="#4a46b8" strokeWidth="1.200" />
      <path d="M0 44l39 15" stroke="#b8323c" />
      <path d="M50 36l10-4" stroke="#5cb85c" />
      <g stroke="#2b2b2b" strokeWidth="1.200" strokeLinejoin="round">
        <path d="M22 22 42 5v19l-10 2v24l-10 4z" fill={ghost ? '#eef1f2' : '#f4f4f4'} />
        <path d="M4 20l18 2v32L4 47z" fill={face} />
        <path d="M4 20 23 7l19-2-20 17z" fill={ghost ? '#d5dcd9' : '#cfcfcf'} />
        <path d="M31 25v24c3 4 22 4 25-1V25z" fill={ghost ? '#e6ecef' : '#aebfcc'} />
        <ellipse cx="43.500" cy="25" rx="12.500" ry="2" fill={ghost ? '#eee' : '#9aa9b5'} />
      </g>
      {!ghost && <path d="M34 28v21l11 2V28z" fill="#c3d1dd" />}
      {ghost && (
        <>
          <path d="M23 7v38M4 47l19-3 30-10" stroke="#7a9a7a" />
          <circle cx="50" cy="51" r="5" fill="#eef5ea" stroke="#4f8a3c" strokeWidth="1.500" />
          <path d="M49 48v6l3-3z" fill="#4f8a3c" />
        </>
      )}
    </svg>
  )
}

const styleThumbs = [
  { sky: '#4ea0d0', ground: '#c9c9c5' },
  { sky: '#ffffff', ground: '#ffffff', ghost: true },
  { sky: '#c9cacd', ground: '#c9c8c5' },
  { sky: '#ffffff', ground: '#ffffff' },
  { sky: '#c4cfc8', ground: '#c9c6ab' },
  { sky: '#3f9be0', ground: '#8fae86' },
  { sky: '#4aa6ee', ground: '#c9c9c5' },
  { sky: '#d6d6d2', ground: '#d2d2ce' },
]

const inset = 'w-full border-2 border-[#808080] border-r-white border-b-white text-xs outline-none'

function Tray() {
  return (
    <aside className="ml-[5px] flex w-[297px] shrink-0 flex-col bg-[#f3f3f3]">
      <div className="flex h-[28px] shrink-0 items-center bg-linear-to-b from-[#c6d4e2] to-[#dbe6f5] pr-1 pl-1">
        <h2 className="flex-1 pb-[2px] text-[15px] font-light">기본 트레이</h2>
        <button aria-label="고정">
          <svg width="8" height="10" viewBox="0 0 8 10"><path d="M1 6h6M2 6V1h4v5M5 1v5M4 6v4" fill="none" stroke="#111" strokeWidth="1.200" /></svg>
        </button>
        <button aria-label="트레이 닫기" className="ml-[9px] flex h-3 w-3 items-center justify-center bg-[#c8555c]">
          <svg width="6" height="6" viewBox="0 0 6 6"><path d="M0 0l6 6M6 0 0 6" stroke="#fff" strokeWidth="1.500" /></svg>
        </button>
      </div>
      <div className="flex min-h-0 flex-1">
        <div className="flex min-w-0 flex-1 flex-col overflow-hidden">
          <SectionHeader title="요소 정보" />
          <div className="h-[180px] shrink-0 px-[2px]">
            <div className="flex h-[31px] items-center justify-between border-b border-[#a0a0a0] pr-[6px] pl-[9px] text-xs">
              <span className="font-medium">선택 없음</span>
              <button aria-label="세부 정보 표시"><ToggleIcon /></button>
            </div>
          </div>

          <SectionHeader title="재질" />
          <div className="flex h-[92px] shrink-0 border-b border-[#a8a8a8] pt-[1px] pl-[2px]">
            <div className="h-[87px] w-[77px] border border-[#aaa] py-[5px]">
              <svg width="75" height="75" viewBox="0 0 75 75">
                <path d="M0 0h75v75H0z" fill="#fff" />
                <path d="M0 0v75h75z" fill="#aebac2" />
              </svg>
            </div>
            <div className="ml-[3px] min-w-0 flex-1 pt-[1px]">
              <input aria-label="재질 이름" defaultValue="기본값" className={inset + ' h-[23px] bg-[#f3f3f3] px-1 pb-[5px] text-[#888]'} />
            </div>
            <div className="ml-[2px] flex w-[30px] flex-col items-center pt-1">
              <button aria-label="보조 창 표시"><ToggleIcon /></button>
              <button aria-label="재질 만들기" className="mt-[10px]">
                <svg width="22" height="22" viewBox="0 0 22 22">
                  <path d="M4 5l8-4 9 4v9l-9 6-8-4z" fill="#2a2a26" stroke="#111" />
                  <path d="M7 5l6-3M11 7l7-4M14 11l6-3M14 16l6-4" stroke="#d6d3ae" strokeWidth="2" />
                  <circle cx="6" cy="15" r="5.500" fill="#fff" stroke="#222" />
                  <path d="M6 12v6M3 15h6" stroke="#222" strokeWidth="1.300" />
                </svg>
              </button>
              <svg width="26" height="26" viewBox="0 0 26 26" className="mt-[6px]">
                <path d="M0 0h26v26H0z" fill="#fff" />
                <path d="M0 0v26h26z" fill="#aebac2" />
              </svg>
            </div>
          </div>
          <Tabs names={['선택', '편집']} dropper />
          <NavRow label="재질 모음" value="색상" />
          <div className="flex h-[173px] shrink-0">
            <div className="grid flex-1 grid-cols-[repeat(3,62px)] content-start gap-[2px] overflow-hidden bg-white pt-[2px] pl-[3px]">
              {swatches.map((c) => (
                <button key={c} aria-label={'색상 ' + c} className="h-[62px] border border-[#aaa] p-[1px]">
                  <span className="block h-full" style={{ background: c }} />
                </button>
              ))}
            </div>
            <Scroll className="w-[20px]" />
          </div>
          <div className="h-[8px] shrink-0 pt-1">
            <div className="h-[2px] bg-[#8e8e8e]" />
          </div>

          <SectionHeader title="구성 요소" closed />
          <SectionHeader title="스타일" />
          <div className="flex h-[92px] shrink-0 border-b border-[#a8a8a8] pt-[1px] pl-[2px]">
            <div className="flex h-[87px] w-[77px] items-center border border-[#aaa]">
              <StyleScene sky="#c4d2d6" ground="#cbcbc9" size={75} />
            </div>
            <div className="ml-[3px] flex min-w-0 flex-1 flex-col gap-[3px] pt-[1px]">
              <input aria-label="스타일 이름" defaultValue="건축 설계 스타일" className={inset + ' h-[23px] bg-white px-1 pb-[5px]'} />
              <textarea
                aria-label="스타일 설명"
                defaultValue={'기본 면 색상. 프로필 가장자\n리. 밝은 하늘색 및 회색 배경\n색상.'}
                className={inset + ' h-[60px] resize-none overflow-hidden bg-white px-1 leading-4'}
              />
            </div>
            <div className="ml-[2px] flex w-[30px] flex-col items-center pt-1">
              <button aria-label="보조 창 표시"><ToggleIcon /></button>
              <button aria-label="스타일 만들기" className="mt-[10px]">
                <svg width="22" height="22" viewBox="0 0 22 22">
                  <path d="M6 9l6-6 5-1-1 6-6 5z" fill="#b9b593" stroke="#555" />
                  <path d="M14 7h7v8h-7z" fill="#5a48b8" stroke="#2e2470" />
                  <circle cx="7" cy="15" r="5.500" fill="#fff" stroke="#222" strokeWidth="1.300" />
                  <path d="M7 12v6M4 15h6" stroke="#222" strokeWidth="1.500" />
                </svg>
              </button>
              <button aria-label="스타일 업데이트" className="mt-[10px]">
                <svg width="18" height="18" viewBox="0 0 18 18" fill="none" stroke="#999" strokeWidth="2">
                  <path d="M2 7c2-6 10-6 13-2M16 1v5h-5M16 11c-2 6-10 6-13 2M2 17v-5h5" />
                </svg>
              </button>
            </div>
          </div>
          <Tabs names={['선택', '편집', '혼합']} />
          <NavRow label="스타일 모음" value="기본 스타일" />
          <div className="grid min-h-0 flex-1 grid-cols-[repeat(4,62px)] content-start gap-[2px] overflow-hidden bg-white pt-[3px] pl-[3px]">
            {styleThumbs.map((s, i) => (
              <button key={i} aria-label={'스타일 ' + (i + 1)} className="flex h-[62px] items-center justify-center border border-[#aaa]">
                <StyleScene {...s} />
              </button>
            ))}
          </div>
        </div>
        <Scroll className="w-[21px] border-l border-white" />
      </div>
    </aside>
  )
}

function StatusBar() {
  return (
    <footer className="flex h-[31px] shrink-0 items-center bg-[#f3f3f3] pt-[3px] pl-[6px] text-[17px] font-light">
      <div className="flex gap-[17px]">
        <button aria-label="위치">
          <svg width="18" height="18" viewBox="0 0 18 18">
            <circle cx="9" cy="9" r="8" fill="none" stroke="#aaa" strokeWidth="1.300" />
            <path d="M9 3c5 0 4 5 0 12-4-7-5-12 0-12z" fill="#999" />
          </svg>
        </button>
        <button aria-label="정보">
          <svg width="18" height="18" viewBox="0 0 18 18">
            <circle cx="9" cy="9" r="8" fill="none" stroke="#222" strokeWidth="1.600" />
            <circle cx="9" cy="4.500" r="1.500" fill="#222" />
            <path d="M6 7h6v4h-1v4H7v-4H6z" fill="#222" />
          </svg>
        </button>
        <button aria-label="로그인">
          <svg width="18" height="18" viewBox="0 0 18 18">
            <circle cx="9" cy="9" r="8" fill="none" stroke="#aaa" strokeWidth="1.300" />
            <circle cx="9" cy="7" r="3.500" fill="#999" />
            <path d="M3 14c1-4 11-4 12 0-3 4-9 4-12 0z" fill="#999" />
          </svg>
        </button>
      </div>
      <span className="ml-[13px] h-[15px] w-px bg-[#999]" />
      <p className="ml-[12px] flex-1">면 요소를 밀고 끌어 3D 모델을 조각합니다.</p>
      <span className="h-[15px] w-px bg-[#999]" />
      <label htmlFor="vcb" className="ml-[11px]">거리</label>
      <input id="vcb" defaultValue="0mm" className="mr-[5px] ml-[9px] h-[28px] w-[250px] border border-b-0 border-[#b4bcd4] bg-[#f4f4f6] pl-[2px] outline-none" />
    </footer>
  )
}

export default function App() {
  return (
    <div className="flex h-screen min-h-[1080px] flex-col bg-[#1a1a1a] py-[26px] font-['Noto_Sans_CJK_KR','Noto_Sans',sans-serif] text-[#08080c]">
      <div className="relative flex min-h-0 flex-1 flex-col bg-[#f3f3f3]">
        <TitleBar />
        <nav className="flex h-[24px] items-center gap-[17px] bg-[#fcfcfc] pb-[2px] pl-[7px] text-[15px] font-light">
          {menus.map((m) => (
            <button key={m}>{m}</button>
          ))}
        </nav>
        <Toolbar />
        <div className="flex min-h-0 flex-1">
          <Palette />
          <Viewport />
          <Tray />
        </div>
        <StatusBar />
        {/* dimmed strip with the name of the current tool in faint letters */}
        <div className="pointer-events-none absolute inset-x-0 top-0 flex h-[111px] items-center bg-black/8 pl-[71px] text-[68px] text-white/10">
          밀기/끌기(Push/Pull)
        </div>
        {/* mouse pointer resting on the push/pull tool */}
        <svg width="12" height="20" viewBox="0 0 12 20" className="pointer-events-none absolute top-[439px] left-[70px]">
          <path d="M1 1v14l3-3 3 7 2-1-3-6h5z" fill="#fff" stroke="#222" />
        </svg>
      </div>
    </div>
  )
}
